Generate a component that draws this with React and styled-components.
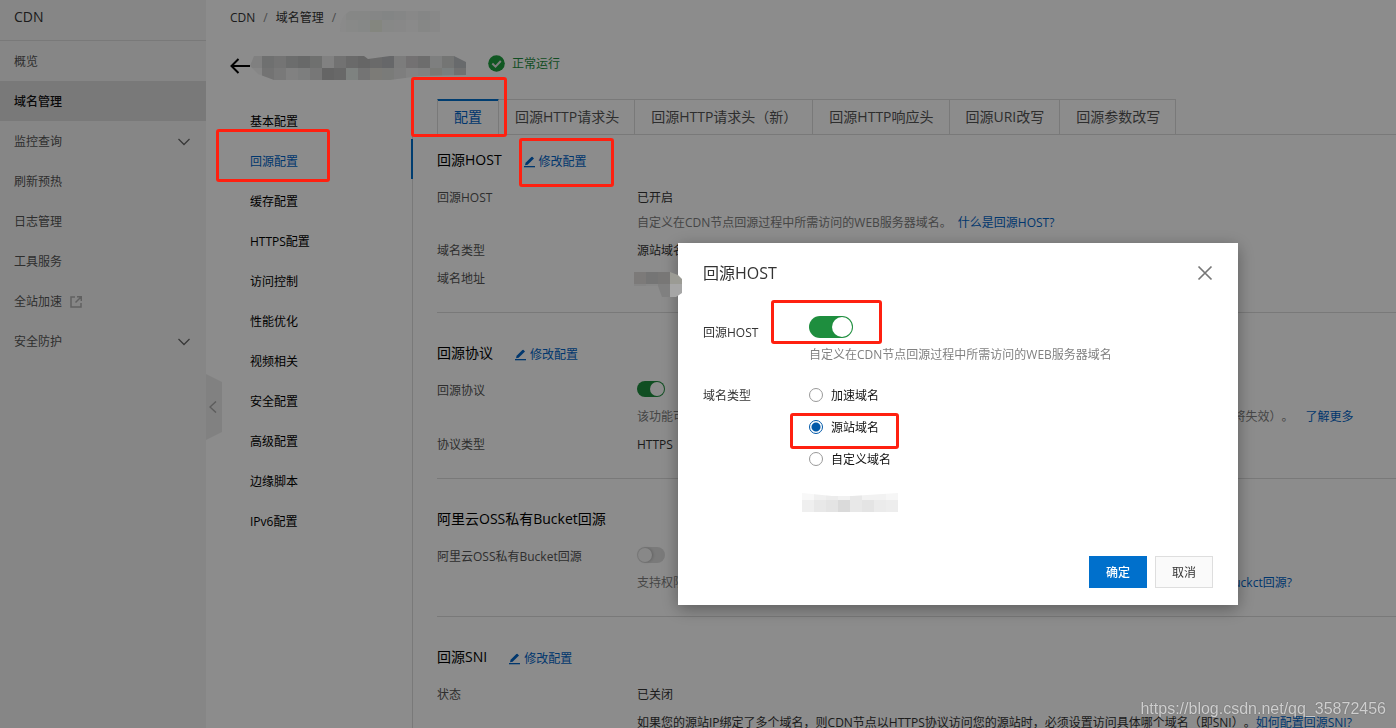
import React, { useState } from "react";
import styled, { createGlobalStyle } from "styled-components";

const GlobalStyle = createGlobalStyle`
  * {
    box-sizing: border-box;
  }
  body {
    margin: 0;
    background: #fff;
    color: #333;
    font-family: "Open Sans", "Noto Sans CJK SC", sans-serif;
    font-size: 12px;
    line-height: 20px;
    text-spacing-trim: space-all;
  }
  a {
    color: #0064c8;
    text-decoration: none;
  }
  button,
  input {
    font: inherit;
    margin: 0;
  }
`;

const Page = styled.div`
  position: relative;
  display: flex;
  height: 100vh;
  overflow: hidden;
`;

const Sidebar = styled.aside`
  position: relative;
  flex: 0 0 206px;
  background: #f5f5f5;
`;

const SidebarTitle = styled.h1`
  margin: 0;
  height: 41px;
  padding: 7px 14px;
  border-bottom: 1px solid #dcdcdc;
  font-size: 14px;
  font-weight: 500;
`;

const SidebarItem = styled.a`
  display: flex;
  align-items: center;
  height: 40px;
  padding: 2px 16px 0 14px;
  color: ${(props) => (props.$active ? "#111" : "#555")};
  font-weight: ${(props) => (props.$active ? 500 : 400)};
  background: ${(props) => (props.$active ? "#dcdcdc" : "transparent")};

  .external {
    margin-left: 8px;
  }
  .arrow {
    margin-left: auto;
  }
`;

const CollapseButton = styled.button`
  position: absolute;
  top: 374px;
  left: 100%;
  display: flex;
  align-items: center;
  width: 16px;
  height: 66px;
  padding: 0 3px;
  border: 0;
  background: #ebebeb;
  clip-path: polygon(0 0, 100% 8px, 100% 58px, 0 100%);
`;

const Main = styled.main`
  flex: 1;
  min-width: 0;
  padding-left: 24px;
`;

const Breadcrumb = styled.nav`
  display: flex;
  gap: 8px;
  padding-top: 8px;

  a {
    color: #333;
  }
  span {
    color: #888;
  }
`;

const DomainHeader = styled.div`
  display: flex;
  align-items: center;
  gap: 238px;
  height: 71px;
`;

const BackLink = styled.a`
  display: flex;
  padding-top: 4px;
`;

const Status = styled.div`
  display: flex;
  align-items: center;
  gap: 7px;
  color: #1e8e3e;
`;

const Columns = styled.div`
  display: flex;
`;

const SubNav = styled.nav`
  flex: 0 0 183px;
  min-height: 640px;
  border-right: 1px solid #dcdcdc;
`;

const SubNavItem = styled.a`
  display: block;
  height: 40px;
  padding: 13px 0 0 20px;
  margin-right: -1px;
  color: ${(props) => (props.$active ? "#0064c8" : "#000")};
  border-right: 2px solid
    ${(props) => (props.$active ? "#0070cc" : "transparent")};
`;

const Content = styled.div`
  flex: 1;
  min-width: 0;
  padding-left: 24px;
`;

const Tabs = styled.div`
  display: flex;
  height: 36px;
  border-bottom: 1px solid #dcdcdc;
`;

const Tab = styled.button`
  padding: 0 15px 0 16px;
  border: 1px solid #dcdcdc;
  border-width: 1px 1px 0 0;
  background: none;
  color: ${(props) => (props.$active ? "#0064c8" : "#555")};
  box-shadow: ${(props) => (props.$active ? "inset 0 1px #0070cc" : "none")};
  border-top-color: ${(props) => (props.$active ? "#0070cc" : "#dcdcdc")};
  font-size: 14px;
  white-space: nowrap;

  &:first-child {
    padding-right: 16px;
    border-left-width: 1px;
  }
`;

const StyledSection = styled.section`
  padding: 30px 0 23px;
  border-bottom: 1px solid #dcdcdc;

  &:first-of-type {
    padding-top: 15px;
  }
`;

const SectionHead = styled.div`
  display: flex;
  align-items: center;
  gap: 22px;
  height: 20px;
  margin-bottom: 18px;

  h2 {
    margin: 0;
    color: #000;
    font-size: 14px;
    font-weight: 400;
  }
`;

const EditLink = styled.a`
  display: flex;
  align-items: center;
  gap: 4px;
  padding-top: 3px;
`;

const Row = styled.div`
  display: grid;
  grid-template-columns: 200px 1fr;
  color: #333;

  & + & {
    margin-top: 8px;
  }
`;

const RowLabel = styled.div`
  color: #555;
`;

const RowValue = styled.div`
  display: flex;
  flex-direction: column;
  align-items: flex-start;
  gap: ${(props) => props.$gap || 5}px;
  white-space: nowrap;
`;

const Hint = styled.div`
  color: ${(props) => (props.$dark ? "#333" : "#808080")};

  a {
    margin-left: ${(props) => props.$linkGap || 0}px;
  }
`;

const Switch = styled.input`
  appearance: none;
  display: block;
  width: ${(props) => (props.$large ? 44 : 28)}px;
  height: ${(props) => (props.$large ? 22 : 16)}px;
  padding: 1px;
  border-radius: 11px;
  background: #dedede;

  &::before {
    content: "";
    display: block;
    height: 100%;
    aspect-ratio: 1;
    border-radius: 50%;
    background: #f7f7f7;
    box-shadow: 1px 0 3px rgba(0, 0, 0, 0.2);
  }
  &:checked {
    background: #1e8e3e;
  }
  &:checked::before {
    margin-left: auto;
    background: #fff;
    box-shadow: none;
  }
`;

const Overlay = styled.div`
  position: fixed;
  inset: 0;
  display: flex;
  align-items: flex-start;
  justify-content: flex-end;
  padding: 243px 158px 0 0;
  background: rgba(0, 0, 0, 0.45);
`;

const Dialog = styled.div`
  width: 560px;
  background: #fff;
  box-shadow: 0 4px 16px rgba(0, 0, 0, 0.35);
`;

const DialogHead = styled.div`
  display: flex;
  align-items: center;
  justify-content: space-between;
  padding: 20px 25px 0;

  h2 {
    margin: 0;
    font-size: 16px;
    font-weight: 400;
  }
  button {
    display: flex;
    padding: 0;
    border: 0;
    background: none;
  }
`;

const DialogBody = styled.div`
  display: flex;
  flex-direction: column;
  gap: 20px;
  height: 273px;
  padding: 33px 25px 0;
`;

const Field = styled.div`
  display: grid;
  grid-template-columns: 106px 1fr;
`;

const FieldLabel = styled.label`
  padding-top: ${(props) => props.$top || 1}px;
`;

const FieldHint = styled.div`
  margin-top: 7px;
  color: #808080;
`;

const RadioList = styled.div`
  display: grid;
  gap: 12px;
`;

const RadioLabel = styled.label`
  display: flex;
  align-items: center;
  gap: 8px;
  height: 20px;
  color: #111;

  input {
    appearance: none;
    width: 14px;
    height: 14px;
    border: 1px solid #999;
    border-radius: 50%;
  }
  input:checked {
    border-color: #0058a8;
    background: radial-gradient(#0058a8 4px, #fff 5px);
  }
  span {
    padding-top: 2px;
  }
`;

const DialogFoot = styled.div`
  display: flex;
  justify-content: flex-end;
  gap: 8px;
  padding: 0 25px 17px;
`;

const Button = styled.button`
  width: 58px;
  height: 32px;
  padding: 2px 0 0;
  border: 1px solid ${(props) => (props.$primary ? "#0070cc" : "#dedede")};
  background: ${(props) => (props.$primary ? "#0070cc" : "#fafafa")};
  color: ${(props) => (props.$primary ? "#fff" : "#333")};
  font-weight: ${(props) => (props.$primary ? 500 : 400)};
`;

const Marker = styled.div`
  position: absolute;
  left: ${(props) => props.$x}px;
  top: ${(props) => props.$y}px;
  width: ${(props) => props.$w}px;
  height: ${(props) => props.$h}px;
  border: 3px solid #ff2010;
  border-radius: 3px;
  pointer-events: none;
`;

const MosaicSvg = styled.svg`
  position: absolute;
  left: ${(props) => props.$x}px;
  top: ${(props) => props.$y}px;
`;

const Watermark = styled.div`
  position: absolute;
  right: 10px;
  bottom: 9px;
  color: rgba(255, 255, 255, 0.72);
  font-family: "Liberation Sans", sans-serif;
  font-size: 16px;
  text-shadow: 0 0 1px rgba(0, 0, 0, 0.5);
`;

const sidebarItems = [
  { label: "概览" },
  { label: "域名管理", active: true },
  { label: "监控查询", arrow: true },
  { label: "刷新预热" },
  { label: "日志管理" },
  { label: "工具服务" },
  { label: "全站加速", external: true },
  { label: "安全防护", arrow: true },
];

const subNavItems = [
  "基本配置",
  "回源配置",
  "缓存配置",
  "HTTPS配置",
  "访问控制",
  "性能优化",
  "视频相关",
  "安全配置",
  "高级配置",
  "边缘脚本",
  "IPv6配置",
];

const tabs = [
  "配置",
  "回源HTTP请求头",
  "回源HTTP请求头（新）",
  "回源HTTP响应头",
  "回源URI改写",
  "回源参数改写",
];

const markers = [
  [216, 129, 114, 53],
  [411, 77, 96, 60],
  [519, 138, 95, 49],
  [771, 300, 111, 44],
  [790, 413, 109, 36],
];

const domainTypes = ["加速域名", "源站域名", "自定义域名"];

const ChevronDown = () => (
  <svg className="arrow" width="12" height="8" viewBox="0 0 12 8" fill="none">
    <path d="M.5 1 6 6.5 11.500 1" stroke="#666" strokeWidth="1.3" />
  </svg>
);

const ExternalIcon = () => (
  <svg className="external" width="12" height="12" viewBox="0 0 12 12" fill="none">
    <path
      d="M5 1H1v10h10V7M7 .8h4.300V5M11 1 5.500 6.500"
      stroke="#b0b0b0"
      strokeWidth="1.500"
    />
  </svg>
);

const PencilIcon = () => (
  <svg width="11" height="12" viewBox="0 0 11 12" fill="#0064c8">
    <path d="M8.300.8 10 2.500 3.600 8.800 1 9.300 1.600 6.800 7.400 1.100z" />
    <path d="M0 10h11v1.300H0z" />
  </svg>
);

const ArrowLeft = () => (
  <svg width="20" height="16" viewBox="0 0 20 16" fill="none">
    <path d="M8.500 1 1.500 8l7 7M1.500 8H20" stroke="#000" strokeWidth="2" />
  </svg>
);

const CheckCircle = () => (
  <svg width="17" height="17" viewBox="0 0 17 17" fill="none">
    <circle cx="8.500" cy="8.500" r="8.300" fill="#1e9e3e" />
    <path d="M4.300 8.500 7.500 11.600 12.800 6" stroke="#e8e8e8" strokeWidth="2" />
  </svg>
);

const CloseIcon = () => (
  <svg width="16" height="16" viewBox="0 0 16 16" fill="none">
    <path d="M1.500 1.500 14.500 14.500M14.500 1.500 1.500 14.500" stroke="#777" strokeWidth="1.700" />
  </svg>
);

// Pixelated cover over a private value, one colour per cell
const Mosaic = ({ x, y, clip, rows, cell = 12 }) => (
  <MosaicSvg
    $x={x}
    $y={y}
    width={rows[0].length * cell}
    height={rows.length * cell}
    style={{ clipPath: clip }}
    shapeRendering="crispEdges"
    aria-hidden="true"
  >
    {rows.map((row, r) =>
      row.map((color, c) => (
        <rect
          key={`${r}-${c}`}
          x={c * cell}
          y={r * cell}
          width={cell}
          height={cell}
          fill={color}
        />
      ))
    )}
  </MosaicSvg>
);

const Section = ({ title, editable, children }) => (
  <StyledSection>
    <SectionHead>
      <h2>{title}</h2>
      {editable && (
        <EditLink href="#edit">
          <PencilIcon />
          修改配置
        </EditLink>
      )}
    </SectionHead>
    {children}
  </StyledSection>
);

const HostDialog = () => {
  const [enabled, setEnabled] = useState(true);
  const [type, setType] = useState("源站域名");

  return (
    <Overlay>
      <Dialog role="dialog" aria-labelledby="dialog-title">
        <DialogHead>
          <h2 id="dialog-title">回源HOST</h2>
          <button aria-label="关闭">
            <CloseIcon />
          </button>
        </DialogHead>
        <DialogBody>
          <Field>
            <FieldLabel htmlFor="host-switch" $top={7}>
              回源HOST
            </FieldLabel>
            <div>
              <Switch
                id="host-switch"
                type="checkbox"
                role="switch"
                $large
                checked={enabled}
                onChange={() => setEnabled(!enabled)}
              />
              <FieldHint>自定义在CDN节点回源过程中所需访问的WEB服务器域名</FieldHint>
            </div>
          </Field>
          <Field role="radiogroup" aria-labelledby="type-label">
            <FieldLabel as="div" id="type-label">
              域名类型
            </FieldLabel>
            <RadioList>
              {domainTypes.map((name) => (
                <RadioLabel key={name}>
                  <input
                    type="radio"
                    name="domain-type"
                    checked={type === name}
                    onChange={() => setType(name)}
                  />
                  <span>{name}</span>
                </RadioLabel>
              ))}
            </RadioList>
          </Field>
        </DialogBody>
        <DialogFoot>
          <Button $primary>确定</Button>
          <Button>取消</Button>
        </DialogFoot>
      </Dialog>
    </Overlay>
  );
};

const App = () => (
  <>
    <GlobalStyle />
    <Page>
      <Sidebar>
        <SidebarTitle>CDN</SidebarTitle>
        {sidebarItems.map((item) => (
          <SidebarItem key={item.label} href="#nav" $active={item.active}>
            {item.label}
            {item.external && <ExternalIcon />}
            {item.arrow && <ChevronDown />}
          </SidebarItem>
        ))}
        <CollapseButton aria-label="收起">
          <svg width="8" height="12" viewBox="0 0 8 12" fill="none">
            <path d="M7 .5 1 6l6 5.500" stroke="#aaa" strokeWidth="1.500" />
          </svg>
        </CollapseButton>
      </Sidebar>

      <Main>
        <Breadcrumb>
          <a href="#cdn">CDN</a>
          <span>/</span>
          <a href="#domains">域名管理</a>
          <span>/</span>
        </Breadcrumb>
        <DomainHeader>
          <BackLink href="#back" aria-label="返回">
            <ArrowLeft />
          </BackLink>
          <Status>
            <CheckCircle />
            正常运行
          </Status>
        </DomainHeader>

        <Columns>
          <SubNav>
            {subNavItems.map((name) => (
              <SubNavItem key={name} href="#config" $active={name === "回源配置"}>
                {name}
              </SubNavItem>
            ))}
          </SubNav>

          <Content>
            <Tabs role="tablist">
              {tabs.map((name, index) => (
                <Tab key={name} role="tab" $active={index === 0}>
                  {name}
                </Tab>
              ))}
            </Tabs>

            <Section title="回源HOST" editable>
              <Row>
                <RowLabel>回源HOST</RowLabel>
                <RowValue>
                  <div>已开启</div>
                  <Hint $linkGap={6}>
                    自定义在CDN节点回源过程中所需访问的WEB服务器域名。
                    <a href="#host">什么是回源HOST?</a>
                  </Hint>
                </RowValue>
              </Row>
              <Row>
                <RowLabel>域名类型</RowLabel>
                <RowValue>源站域名</RowValue>
              </Row>
              <Row>
                <RowLabel>域名地址</RowLabel>
              </Row>
            </Section>

            <Section title="回源协议" editable>
              <Row>
                <RowLabel as="label" htmlFor="protocol-switch">
                  回源协议
                </RowLabel>
                <RowValue $gap={10}>
                  <Switch id="protocol-switch" type="checkbox" role="switch" defaultChecked />
                  <Hint $linkGap={12}>
                    该功能可指定回源使用的协议，开启后将按照您所选择的协议访问源站（非HTTP 协议类型设置的自定义回源端口将失效）。
                    <a href="#protocol">了解更多</a>
                  </Hint>
                </RowValue>
              </Row>
              <Row>
                <RowLabel>协议类型</RowLabel>
                <RowValue>HTTPS</RowValue>
              </Row>
            </Section>

            <Section title="阿里云OSS私有Bucket回源">
              <Row>
                <RowLabel as="label" htmlFor="bucket-switch">
                  阿里云OSS私有Bucket回源
                </RowLabel>
                <RowValue $gap={10}>
                  <Switch id="bucket-switch" type="checkbox" role="switch" />
                  <Hint $linkGap={14}>
                    支持权限为私有的阿里云存储空间作为源站，开启后可防止资源盗链，保障数据安全。
                    <a href="#bucket">什么是阿里云OSS私有Buckct回源?</a>
                  </Hint>
                </RowValue>
              </Row>
            </Section>

            <Section title="回源SNI" editable>
              <Row>
                <RowLabel>状态</RowLabel>
                <RowValue $gap={8}>
                  <div>已关闭</div>
                  <Hint $dark>
                    如果您的源站IP绑定了多个域名，则CDN节点以HTTPS协议访问您的源站时，必须设置访问具体哪个域名（即SNI）。
                    <a href="#sni">如何配置回源SNI?</a>
                  </Hint>
                </RowValue>
              </Row>
            </Section>
          </Content>
        </Columns>
      </Main>

      <HostDialog />

      <Mosaic
        x={334}
        y={8}
        clip="path('M16 3H106V24H6Q6 8 16 3Z')"
        rows={[
          ["#8a8a8a", "#868786", "#868786", "#858686", "#838585", "#858686", "#888", "#858686", "#888"],
          ["#8a8a8a", "#888988", "#868887", "#84867f", "#878887", "#888", "#8a8a8a", "#868786", "#888"],
        ]}
      />
      <Mosaic
        x={250}
        y={56}
        clip="path('M4 0H114L118 3 140 0H204L216 6V19L170 20 140 24H24L8 18 0 10Z')"
        rows={[
          ["#808080", "#6f7070", "#747474", "#6c6d6d", "#686969", "#6f706f", "#818181", "#727272", "#6a6a6a", "#666", "#6a6a6a", "#666769", "#7c7c7c", "#737172", "#6d6d6d", "#7e7f7f", "#747574", "#686a6c"],
          ["#868686", "#737373", "#797979", "#818181", "#7d7e7e", "#777", "#656565", "#686868", "#7e8280", "#747474", "#7c7b77", "#7a7b79", "#7e7e7e", "#838383", "#818181", "#797a77", "#7a7f7f", "#717171"],
        ]}
      />
      <Mosaic
        x={634}
        y={272}
        clip="path('M0 0H36L44 3 48 7V21L42 25H28L24 14H0Z')"
        rows={[
          ["#7c7a79", "#757575", "#787776", "#9b9b94"],
          ["#858585", "#888", "#808080", "#a6a6a6"],
          ["#858585", "#888", "#808080", "#a6a6a6"],
        ]}
      />
      <Mosaic
        x={802}
        y={488}
        clip="path('M0 5 30 8H50L96 5V24H0Z')"
        rows={[
          ["#f8f8f8", "#f0f0f0", "#ececec", "#f1f1f1", "#e8e8e8", "#f2f2f2", "#f2f2f2", "#f6f6f6"],
          ["#efefef", "#e8e8e8", "#e4e4e4", "#dadada", "#e8e8e8", "#e4e4e4", "#ebebeb", "#ededed"],
        ]}
      />
      {markers.map(([x, y, w, h]) => (
        <Marker key={`${x}-${y}`} $x={x} $y={y} $w={w} $h={h} />
      ))}
      <Watermark>https://blog.csdn.net/qq_35872456</Watermark>
    </Page>
  </>
);

export default App;
